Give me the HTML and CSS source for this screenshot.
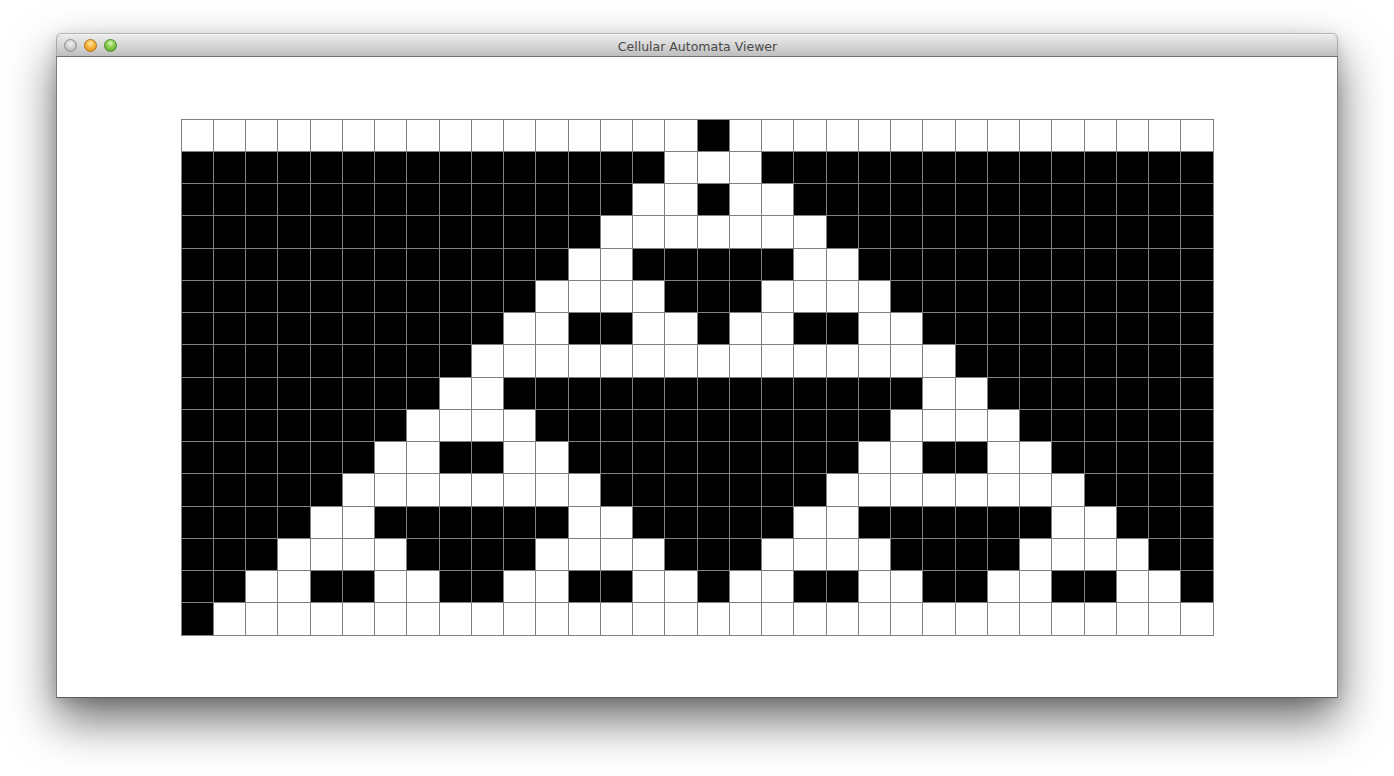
FILE: index.html
```html
<!DOCTYPE html>
<html lang="en">
<head>
<meta charset="utf-8">
<title>Cellular Automata Viewer</title>
<link rel="stylesheet" href="styles.css">
</head>
<body>
<div class="window">
  <div class="titlebar">
    <div class="lights">
      <span class="light close"></span>
      <span class="light min"></span>
      <span class="light max"></span>
    </div>
    <div class="title">Cellular Automata Viewer</div>
  </div>
  <div class="content">
    <div class="grid">
      <div class="row"><i></i><i></i><i></i><i></i><i></i><i></i><i></i><i></i><i></i><i></i><i></i><i></i><i></i><i></i><i></i><i></i><i class="on"></i><i></i><i></i><i></i><i></i><i></i><i></i><i></i><i></i><i></i><i></i><i></i><i></i><i></i><i></i><i></i></div>
      <div class="row"><i class="on"></i><i class="on"></i><i class="on"></i><i class="on"></i><i class="on"></i><i class="on"></i><i class="on"></i><i class="on"></i><i class="on"></i><i class="on"></i><i class="on"></i><i class="on"></i><i class="on"></i><i class="on"></i><i class="on"></i><i></i><i></i><i></i><i class="on"></i><i class="on"></i><i class="on"></i><i class="on"></i><i class="on"></i><i class="on"></i><i class="on"></i><i class="on"></i><i class="on"></i><i class="on"></i><i class="on"></i><i class="on"></i><i class="on"></i><i class="on"></i></div>
      <div class="row"><i class="on"></i><i class="on"></i><i class="on"></i><i class="on"></i><i class="on"></i><i class="on"></i><i class="on"></i><i class="on"></i><i class="on"></i><i class="on"></i><i class="on"></i><i class="on"></i><i class="on"></i><i class="on"></i><i></i><i></i><i class="on"></i><i></i><i></i><i class="on"></i><i class="on"></i><i class="on"></i><i class="on"></i><i class="on"></i><i class="on"></i><i class="on"></i><i class="on"></i><i class="on"></i><i class="on"></i><i class="on"></i><i class="on"></i><i class="on"></i></div>
      <div class="row"><i class="on"></i><i class="on"></i><i class="on"></i><i class="on"></i><i class="on"></i><i class="on"></i><i class="on"></i><i class="on"></i><i class="on"></i><i class="on"></i><i class="on"></i><i class="on"></i><i class="on"></i><i></i><i></i><i></i><i></i><i></i><i></i><i></i><i class="on"></i><i class="on"></i><i class="on"></i><i class="on"></i><i class="on"></i><i class="on"></i><i class="on"></i><i class="on"></i><i class="on"></i><i class="on"></i><i class="on"></i><i class="on"></i></div>
      <div class="row"><i class="on"></i><i class="on"></i><i class="on"></i><i class="on"></i><i class="on"></i><i class="on"></i><i class="on"></i><i class="on"></i><i class="on"></i><i class="on"></i><i class="on"></i><i class="on"></i><i></i><i></i><i class="on"></i><i class="on"></i><i class="on"></i><i class="on"></i><i class="on"></i><i></i><i></i><i class="on"></i><i class="on"></i><i class="on"></i><i class="on"></i><i class="on"></i><i class="on"></i><i class="on"></i><i class="on"></i><i class="on"></i><i class="on"></i><i class="on"></i></div>
      <div class="row"><i class="on"></i><i class="on"></i><i class="on"></i><i class="on"></i><i class="on"></i><i class="on"></i><i class="on"></i><i class="on"></i><i class="on"></i><i class="on"></i><i class="on"></i><i></i><i></i><i></i><i></i><i class="on"></i><i class="on"></i><i class="on"></i><i></i><i></i><i></i><i></i><i class="on"></i><i class="on"></i><i class="on"></i><i class="on"></i><i class="on"></i><i class="on"></i><i class="on"></i><i class="on"></i><i class="on"></i><i class="on"></i></div>
      <div class="row"><i class="on"></i><i class="on"></i><i class="on"></i><i class="on"></i><i class="on"></i><i class="on"></i><i class="on"></i><i class="on"></i><i class="on"></i><i class="on"></i><i></i><i></i><i class="on"></i><i class="on"></i><i></i><i></i><i class="on"></i><i></i><i></i><i class="on"></i><i class="on"></i><i></i><i></i><i class="on"></i><i class="on"></i><i class="on"></i><i class="on"></i><i class="on"></i><i class="on"></i><i class="on"></i><i class="on"></i><i class="on"></i></div>
      <div class="row"><i class="on"></i><i class="on"></i><i class="on"></i><i class="on"></i><i class="on"></i><i class="on"></i><i class="on"></i><i class="on"></i><i class="on"></i><i></i><i></i><i></i><i></i><i></i><i></i><i></i><i></i><i></i><i></i><i></i><i></i><i></i><i></i><i></i><i class="on"></i><i class="on"></i><i class="on"></i><i class="on"></i><i class="on"></i><i class="on"></i><i class="on"></i><i class="on"></i></div>
      <div class="row"><i class="on"></i><i class="on"></i><i class="on"></i><i class="on"></i><i class="on"></i><i class="on"></i><i class="on"></i><i class="on"></i><i></i><i></i><i class="on"></i><i class="on"></i><i class="on"></i><i class="on"></i><i class="on"></i><i class="on"></i><i class="on"></i><i class="on"></i><i class="on"></i><i class="on"></i><i class="on"></i><i class="on"></i><i class="on"></i><i></i><i></i><i class="on"></i><i class="on"></i><i class="on"></i><i class="on"></i><i class="on"></i><i class="on"></i><i class="on"></i></div>
      <div class="row"><i class="on"></i><i class="on"></i><i class="on"></i><i class="on"></i><i class="on"></i><i class="on"></i><i class="on"></i><i></i><i></i><i></i><i></i><i class="on"></i><i class="on"></i><i class="on"></i><i class="on"></i><i class="on"></i><i class="on"></i><i class="on"></i><i class="on"></i><i class="on"></i><i class="on"></i><i class="on"></i><i></i><i></i><i></i><i></i><i class="on"></i><i class="on"></i><i class="on"></i><i class="on"></i><i class="on"></i><i class="on"></i></div>
      <div class="row"><i class="on"></i><i class="on"></i><i class="on"></i><i class="on"></i><i class="on"></i><i class="on"></i><i></i><i></i><i class="on"></i><i class="on"></i><i></i><i></i><i class="on"></i><i class="on"></i><i class="on"></i><i class="on"></i><i class="on"></i><i class="on"></i><i class="on"></i><i class="on"></i><i class="on"></i><i></i><i></i><i class="on"></i><i class="on"></i><i></i><i></i><i class="on"></i><i class="on"></i><i class="on"></i><i class="on"></i><i class="on"></i></div>
      <div class="row"><i class="on"></i><i class="on"></i><i class="on"></i><i class="on"></i><i class="on"></i><i></i><i></i><i></i><i></i><i></i><i></i><i></i><i></i><i class="on"></i><i class="on"></i><i class="on"></i><i class="on"></i><i class="on"></i><i class="on"></i><i class="on"></i><i></i><i></i><i></i><i></i><i></i><i></i><i></i><i></i><i class="on"></i><i class="on"></i><i class="on"></i><i class="on"></i></div>
      <div class="row"><i class="on"></i><i class="on"></i><i class="on"></i><i class="on"></i><i></i><i></i><i class="on"></i><i class="on"></i><i class="on"></i><i class="on"></i><i class="on"></i><i class="on"></i><i></i><i></i><i class="on"></i><i class="on"></i><i class="on"></i><i class="on"></i><i class="on"></i><i></i><i></i><i class="on"></i><i class="on"></i><i class="on"></i><i class="on"></i><i class="on"></i><i class="on"></i><i></i><i></i><i class="on"></i><i class="on"></i><i class="on"></i></div>
      <div class="row"><i class="on"></i><i class="on"></i><i class="on"></i><i></i><i></i><i></i><i></i><i class="on"></i><i class="on"></i><i class="on"></i><i class="on"></i><i></i><i></i><i></i><i></i><i class="on"></i><i class="on"></i><i class="on"></i><i></i><i></i><i></i><i></i><i class="on"></i><i class="on"></i><i class="on"></i><i class="on"></i><i></i><i></i><i></i><i></i><i class="on"></i><i class="on"></i></div>
      <div class="row"><i class="on"></i><i class="on"></i><i></i><i></i><i class="on"></i><i class="on"></i><i></i><i></i><i class="on"></i><i class="on"></i><i></i><i></i><i class="on"></i><i class="on"></i><i></i><i></i><i class="on"></i><i></i><i></i><i class="on"></i><i class="on"></i><i></i><i></i><i class="on"></i><i class="on"></i><i></i><i></i><i class="on"></i><i class="on"></i><i></i><i></i><i class="on"></i></div>
      <div class="row"><i class="on"></i><i></i><i></i><i></i><i></i><i></i><i></i><i></i><i></i><i></i><i></i><i></i><i></i><i></i><i></i><i></i><i></i><i></i><i></i><i></i><i></i><i></i><i></i><i></i><i></i><i></i><i></i><i></i><i></i><i></i><i></i><i></i></div>
    </div>
  </div>
</div>
</body>
</html>
```

FILE: styles.css
```css
* { box-sizing: border-box; }

html, body {
  margin: 0;
  padding: 0;
  background: #ffffff;
  width: 1394px;
  height: 776px;
  overflow: hidden;
}

.window {
  margin: 34px 0 0 56px;
  width: 1282px;
  height: 664px;
  border: 1px solid #7c7c7c;
  border-top: none;
  border-bottom-color: #5c5c5c;
  border-radius: 5px 5px 0 0;
  background: #ffffff;
  box-shadow: 0 22px 48px rgba(0, 0, 0, 0.58), 0 4px 14px rgba(0, 0, 0, 0.15);
  display: flex;
  flex-direction: column;
}

.titlebar {
  height: 23px;
  flex: none;
  position: relative;
  display: flex;
  align-items: center;
  justify-content: center;
  border-radius: 5px 5px 0 0;
  border-top: 1px solid #f2f2f2;
  border-bottom: 1px solid #717171;
  background: linear-gradient(#ebebeb, #d6d6d6 50%, #bebebe);
  margin: 0 -1px;
  box-shadow: inset 1px 0 0 #a8a8a8, inset -1px 0 0 #a8a8a8, 0 -1px 0 #b5b5b5;
}

.lights {
  position: absolute;
  left: 8px;
  top: 4px;
  display: flex;
  gap: 7px;
}

.light {
  width: 13px;
  height: 13px;
  border-radius: 50%;
  display: block;
}

.light.close {
  background: radial-gradient(circle at 50% 35%, #f4f4f4 0, #d2d2d2 45%, #a9a9a9 100%);
  border: 1px solid #8c8c8c;
}

.light.min {
  background: radial-gradient(circle at 50% 30%, #ffe9a6 0, #f7b844 40%, #e08c0c 100%);
  border: 1px solid #b0741a;
}

.light.max {
  background: radial-gradient(circle at 50% 30%, #dcf7b0 0, #8fd155 40%, #4e9f25 100%);
  border: 1px solid #4c8a2c;
}

.title {
  font-family: "DejaVu Sans", "Liberation Sans", sans-serif;
  font-size: 12.5px;
  color: #4a4a4a;
  padding-top: 2px;
  padding-left: 1px;
}

.content {
  flex: 1;
  display: flex;
  align-items: center;
  justify-content: center;
}

.grid {
  width: 1033px;
  height: 517px;
  display: flex;
  flex-direction: column;
  border-left: 1px solid #808080;
  border-top: 1px solid #808080;
}

.row {
  flex: 1;
  display: flex;
}

.row > i {
  flex: 1;
  display: block;
  background: #ffffff;
  border-right: 1px solid #808080;
  border-bottom: 1px solid #808080;
}

.row > i.on {
  background: #000000;
}
```
